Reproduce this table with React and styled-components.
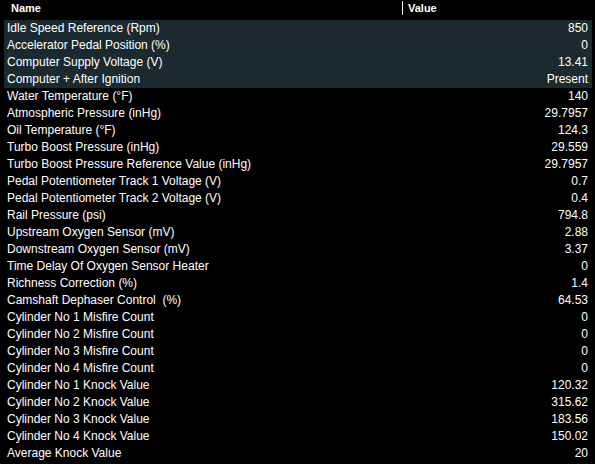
import React from 'react';
import styled, { createGlobalStyle } from 'styled-components';

const rows = [
    ['Idle Speed Reference (Rpm)', '850', true],
    ['Accelerator Pedal Position (%)', '0', true],
    ['Computer Supply Voltage (V)', '13.41', true],
    ['Computer + After Ignition', 'Present', true],
    ['Water Temperature (°F)', '140'],
    ['Atmospheric Pressure (inHg)', '29.7957'],
    ['Oil Temperature (°F)', '124.3'],
    ['Turbo Boost Pressure (inHg)', '29.559'],
    ['Turbo Boost Pressure Reference Value (inHg)', '29.7957'],
    ['Pedal Potentiometer Track 1 Voltage (V)', '0.7'],
    ['Pedal Potentiometer Track 2 Voltage (V)', '0.4'],
    ['Rail Pressure (psi)', '794.8'],
    ['Upstream Oxygen Sensor (mV)', '2.88'],
    ['Downstream Oxygen Sensor (mV)', '3.37'],
    ['Time Delay Of Oxygen Sensor Heater', '0'],
    ['Richness Correction (%)', '1.4'],
    ['Camshaft Dephaser Control  (%)', '64.53'],
    ['Cylinder No 1 Misfire Count', '0'],
    ['Cylinder No 2 Misfire Count', '0'],
    ['Cylinder No 3 Misfire Count', '0'],
    ['Cylinder No 4 Misfire Count', '0'],
    ['Cylinder No 1 Knock Value', '120.32'],
    ['Cylinder No 2 Knock Value', '315.62'],
    ['Cylinder No 3 Knock Value', '183.56'],
    ['Cylinder No 4 Knock Value', '150.02'],
    ['Average Knock Value', '20'],
];

const App = () => {
    return (
        <>
            <GlobalStyle />
            <Table>
                <Header>
                    <HeadCell>Name</HeadCell>
                    <HeadCell $divider>Value</HeadCell>
                </Header>
                {rows.map(([name, value, selected]) => (
                    <Row key={name} $selected={selected}>
                        <NameCell>{name}</NameCell>
                        <ValueCell>{value}</ValueCell>
                    </Row>
                ))}
            </Table>
        </>
    );
};

const GlobalStyle = createGlobalStyle`
    html, body {
        margin: 0;
        background: #000;
    }
`;

const Table = styled.div`
    width: 595px;
    height: 464px;
    background: #000;
    color: #fff;
    font-family: "Liberation Sans", Arial, sans-serif;
    font-size: 12px;
    overflow: hidden;
`;

const Header = styled.div`
    display: grid;
    grid-template-columns: 402px 1fr;
    height: 20px;
    align-items: center;
`;

const HeadCell = styled.div`
    font-weight: bold;
    font-size: 11px;
    height: 14px;
    line-height: 14px;
    margin-top: -4px;
    padding-left: ${p => (p.$divider ? '5px' : '11px')};
    border-left: ${p => (p.$divider ? '1px solid #fff' : 'none')};
`;

const Row = styled.div`
    display: grid;
    grid-template-columns: 1fr auto;
    height: 17px;
    line-height: 17px;
    margin: 0 3px 0 4px;
    padding: 0 4px 0 3px;
    background: ${p => (p.$selected ? '#1b2a2e' : 'transparent')};
`;

const NameCell = styled.div`
    white-space: pre;
`;

const ValueCell = styled.div`
    text-align: right;
`;

export default App;
